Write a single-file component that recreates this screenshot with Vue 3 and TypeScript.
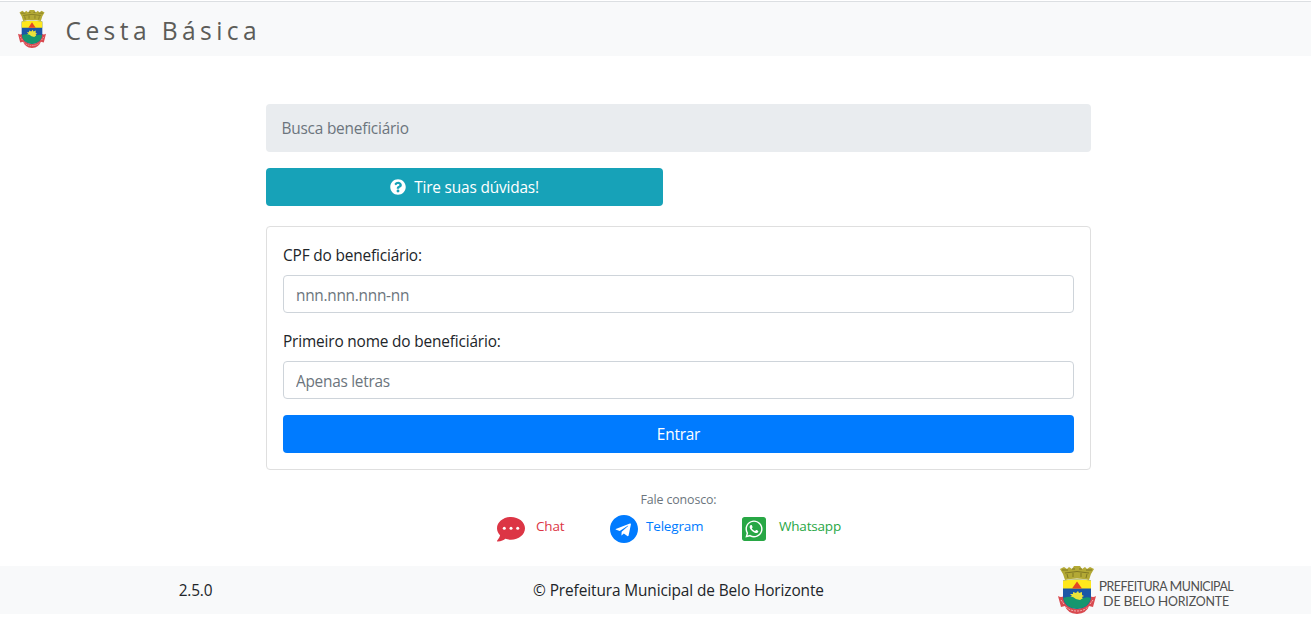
<script setup lang="ts">
import { ref } from 'vue'

const cpf = ref('')
const nome = ref('')
const version = '2.5.0'
</script>

<template>
  <div class="page">
    <svg class="defs" width="0" height="0" aria-hidden="true">
      <symbol id="crest" viewBox="0 0 38 48" preserveAspectRatio="none">
        <path d="M2 3 L6 1 9 3 11 1 14 3 16 0 22 0 24 3 27 1 29 3 32 1 36 3 33 8 31 14 Q19 11 7 14 L5 8Z" fill="#b3a935" />
        <path d="M4 4h6M14 3h3M21 3h3M28 4h6M9 8l1 4M15 7v4M23 7v4M29 8l-1 4M7 7q12-3 24 0" fill="none" stroke="#7b7222" stroke-width=".9" />
        <path d="M0 30 Q3 32 6 30 Q7 42 19 43 Q31 42 32 30 Q35 32 38 30 L35 41 31 40 Q29 47 19 48 Q9 47 7 40 L3 41Z" fill="#d94a50" />
        <path d="M3 34l3 4M8 41q4 4 11 4t11-4M35 34l-3 4" fill="none" stroke="#f3b2b1" stroke-width="1" stroke-dasharray="2 1" />
        <path d="M5 14.500 Q19 12.500 33 14.500V31Q32 42 19 43Q6 42 5 31Z" fill="#1b56a6" />
        <path d="M5 14.500 Q19 12.500 33 14.500V22.500H5Z" fill="#ffe81c" />
        <path d="M19 15.500 L24 22.500H14Z" fill="#e44724" />
        <path d="M12 31l2-1-2-2 3 0 0-2 3 1 2-2 1 2 3-1 0 3 2 1-2 1 1 2-2 1-8 1Z" fill="#ebe33a" />
        <path d="M5.200 32 Q10 30 15 31 Q18 34 22 34 Q27 30 32.800 32 Q31 42 19 42.800 Q7 42 5.200 32Z" fill="#16966f" />
      </symbol>
    </svg>

    <header class="topbar">
      <svg class="brand-crest"><use href="#crest" /></svg>
      <h1 class="title">Cesta Básica</h1>
    </header>

    <main class="content">
      <div class="crumb">Busca beneficiário</div>

      <button class="btn help" type="button">
        <svg class="question" viewBox="0 0 512 512"><path fill="currentColor" d="M504 256c0 136.997-111.043 248-248 248S8 392.997 8 256C8 119.083 119.043 8 256 8s248 111.083 248 248zM262.655 90c-54.497 0-89.255 22.957-116.549 63.758-3.536 5.286-2.353 12.415 2.715 16.258l34.699 26.31c5.205 3.947 12.621 3.008 16.665-2.122 17.864-22.658 30.113-35.797 57.303-35.797 20.429 0 45.698 13.148 45.698 32.958 0 14.976-12.363 22.667-32.534 33.976C247.128 238.528 216 254.941 216 296v4c0 6.627 5.373 12 12 12h56c6.627 0 12-5.373 12-12v-1.333c0-28.462 83.186-29.647 83.186-106.667 0-58.002-60.165-102-116.531-102zM256 338c-25.365 0-46 20.635-46 46 0 25.364 20.635 46 46 46s46-20.636 46-46c0-25.365-20.635-46-46-46z" /></svg>
        <span>Tire suas dúvidas!</span>
      </button>

      <form class="card" @submit.prevent>
        <label for="cpf" class="cpf-label">CPF do beneficiário:</label>
        <input id="cpf" v-model="cpf" type="text" placeholder="nnn.nnn.nnn-nn" />
        <label for="nome" class="nome-label">Primeiro nome do beneficiário:</label>
        <input id="nome" v-model="nome" type="text" placeholder="Apenas letras" />
        <button class="btn enter" type="submit"><span>Entrar</span></button>
      </form>

      <p class="contact-title">Fale conosco:</p>
      <nav class="contacts">
        <a class="chat">
          <svg viewBox="0 0 28 26"><path fill="currentColor" d="M14 1C6.3 1 0 6 0 12.2c0 2.7 1.2 5.1 3.1 7.1C2.5 22 .3 24.3.2 24.5c-.4.4-.1 1.1.5 1.1 3.6 0 6.2-1.7 7.6-2.8 1.8.6 3.7.9 5.7.9 7.7 0 14-5.1 14-11.4S21.7 1 14 1Z" /><g fill="#fff"><circle cx="7.3" cy="12.3" r="1.5" /><circle cx="14" cy="12.3" r="1.5" /><circle cx="20.7" cy="12.3" r="1.5" /></g></svg>
          <span>Chat</span>
        </a>
        <a class="telegram">
          <svg viewBox="0 8 496 496"><path fill="currentColor" d="M248 8C111 8 0 119 0 256s111 248 248 248 248-111 248-248S385 8 248 8zm121.8 169.9l-40.7 191.8c-3 13.6-11.1 16.9-22.4 10.5l-62-45.7-29.9 28.8c-3.3 3.3-6.1 6.1-12.5 6.1l4.4-63.1 114.9-103.8c5-4.4-1.1-6.9-7.7-2.5l-142 89.4-61.2-19.1c-13.3-4.2-13.6-13.3 2.8-19.7l239.1-92.2c11.1-4 20.8 2.7 17.2 19.5z" /></svg>
          <span>Telegram</span>
        </a>
        <a class="whatsapp">
          <svg viewBox="0 32 448 448"><path fill="currentColor" d="M224 122.8c-72.7 0-131.8 59.1-131.9 131.8 0 24.9 7 49.2 20.2 70.1l3.1 5-13.3 48.6 49.9-13.1 4.8 2.9c20.2 12 43.4 18.4 67.1 18.4h.1c72.6 0 133.3-59.1 133.3-131.8 0-35.2-15.2-68.3-40.1-93.2-25-25-58-38.7-93.2-38.7zm77.5 188.4c-3.3 9.3-19.1 17.7-26.7 18.8-12.6 1.9-22.4.9-47.5-9.9-39.7-17.2-65.7-57.2-67.7-59.8-2-2.6-16.2-21.5-16.2-41s10.2-29.1 13.9-33.1c3.6-4 7.9-5 10.6-5 2.6 0 5.3 0 7.6.1 2.4.1 5.7-.9 8.9 6.8 3.3 7.9 11.2 27.4 12.2 29.4s1.7 4.3.3 6.9c-7.6 15.2-15.7 14.6-11.6 21.6 15.3 26.3 30.6 35.4 53.9 47.1 4 2 6.3 1.7 8.6-1 2.3-2.6 9.9-11.6 12.5-15.5 2.6-4 5.3-3.3 8.9-2 3.6 1.3 23.1 10.9 27.1 12.9s6.6 3 7.6 4.6c.9 1.9.9 9.9-2.4 19.1zM400 32H48C21.5 32 0 53.5 0 80v352c0 26.5 21.5 48 48 48h352c26.5 0 48-21.5 48-48V80c0-26.5-21.5-48-48-48zM223.9 413.2c-26.6 0-52.7-6.7-75.8-19.3L64 416l22.5-82.2c-13.9-24-21.2-51.3-21.2-79.3C65.4 167.1 136.5 96 223.9 96c42.4 0 82.2 16.5 112.2 46.5 29.9 30 47.9 69.8 47.9 112.2 0 87.4-72.7 158.5-160.1 158.5z" /></svg>
          <span>Whatsapp</span>
        </a>
      </nav>
    </main>

    <footer class="footer">
      <span class="version">{{ version }}</span>
      <span class="copyright">© Prefeitura Municipal de Belo Horizonte</span>
      <div class="city">
        <svg class="city-crest"><use href="#crest" /></svg>
        <div class="city-name">
          <div><b>P</b>REFEITURA <b>M</b>UNICIPAL</div>
          <div class="line-two"><b>D</b>E <b>B</b>ELO <b>H</b>ORIZONTE</div>
        </div>
      </div>
    </footer>
  </div>
</template>

<style>
body { background: #fff; }
</style>

<style scoped>
.page, .page * { box-sizing: border-box; }
.page {
  height: 643px;
  overflow: hidden;
  color: #212529;
  font: 15.4px/24px "Open Sans", "Noto Sans", sans-serif;
  letter-spacing: -0.21px;
}
.defs { display: block; }
.topbar {
  height: 55px;
  margin-top: 1px;
  padding-left: 18px;
  display: flex;
  align-items: center;
  background: #f8f9fa;
  border-top: 1px solid #dcdfe2;
}
.brand-crest { width: 28px; height: 38px; }
.title {
  margin: 4px 0 0 19.5px;
  color: #5c5c58;
  font-size: 24.6px;
  line-height: 36px;
  font-weight: 400;
  letter-spacing: 4.4px;
}
.content {
  width: 825px;
  margin: 48px 0 0 266px;
}
.crumb {
  height: 48px;
  padding: 13px 15.5px 11px;
  color: #6c757d;
  background: #e9ecef;
  border-radius: 4px;
}
.btn {
  height: 38px;
  display: flex;
  align-items: center;
  justify-content: center;
  padding: 0;
  border: 0;
  border-radius: 4px;
  color: #fff;
  font: inherit;
  letter-spacing: inherit;
}
.btn span { padding-top: 2px; }
.help {
  width: 397px;
  margin-top: 16px;
  gap: 8px;
  letter-spacing: -0.17px;
  background: #17a2b8;
}
.question { width: 16px; height: 16px; }
.card {
  height: 244px;
  margin-top: 20px;
  padding: 16px;
  border: 1px solid #dfdfdf;
  border-radius: 4px;
}
label { display: block; height: 24px; margin-bottom: 8px; padding-top: 1px; letter-spacing: -0.16px; }
.nome-label { margin-top: 16px; }
input {
  display: block;
  width: 100%;
  height: 38px;
  padding: 8px 12px 6px;
  border: 1px solid #ced4da;
  border-radius: 4px;
  background: #fff;
  color: #495057;
  font: inherit;
  letter-spacing: -0.27px;
  outline: 0;
}
input::placeholder { color: #6c757d; opacity: 1; }
.enter { width: 100%; margin-top: 16px; background: #007bff; }
.contact-title {
  margin: 19px 0 0;
  height: 21px;
  color: #6c757d;
  font-size: 12.4px;
  line-height: 21px;
  letter-spacing: -0.13px;
  text-align: center;
}
.contacts {
  height: 33px;
  margin-top: 3px;
  padding-left: 231px;
  display: flex;
  font-size: 13.5px;
  line-height: 26px;
  letter-spacing: -0.19px;
}
.contacts a { display: flex; align-items: flex-start; }
.contacts svg { flex: none; }
.chat { width: 113px; color: #dc3545; }
.chat svg { width: 28px; height: 26px; margin: 3px 11px 0 0; }
.telegram { width: 132px; color: #007bff; }
.telegram svg { width: 28px; height: 28px; margin: 2px 8px 0 0; }
.whatsapp { color: #28a745; }
.whatsapp svg { width: 24px; height: 24px; margin: 4px 13px 0 0; }
.footer {
  height: 48px;
  margin-top: 20px;
  display: grid;
  grid-template-columns: 391px 575px 345px;
  align-items: center;
  background: #f8f9fa;
  text-align: center;
}
.version, .copyright { padding-top: 2px; }
.copyright { letter-spacing: -0.1px; }
.city { display: flex; align-items: center; padding-left: 92px; }
.city-crest { width: 38px; height: 48px; }
.city-name {
  width: 136px;
  margin: 8px 0 0 2px;
  color: #50504f;
  font: 12.4px/14px Lato, "Open Sans", sans-serif;
  letter-spacing: -0.5px;
  white-space: nowrap;
}
.city-name b { font-size: 13.8px; font-weight: 400; }
.line-two { letter-spacing: -0.17px; }
</style>
